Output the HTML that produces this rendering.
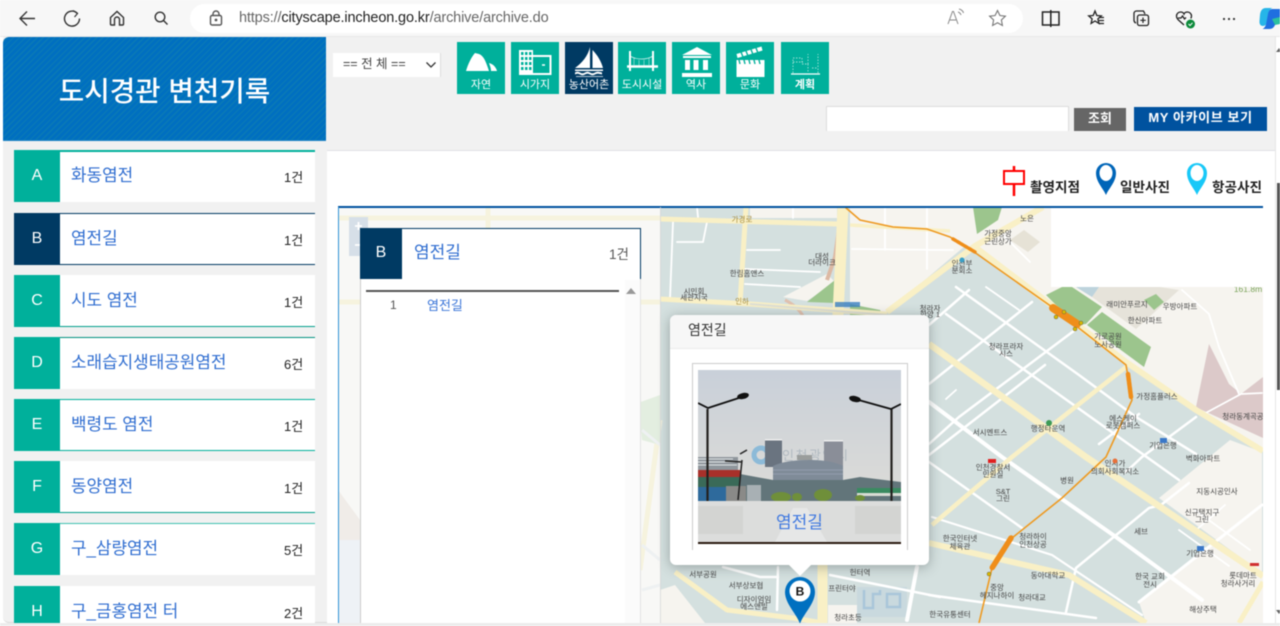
<!DOCTYPE html>
<html lang="ko"><head><meta charset="utf-8"><title>도시경관 변천기록</title>
<style>
*{box-sizing:border-box}
html,body{margin:0;padding:0;width:1280px;height:626px;overflow:hidden;background:#fff}
body{font-family:"Liberation Sans","Noto Sans CJK KR",sans-serif}
#w{position:absolute;left:0;top:0;width:1280px;height:626px;overflow:hidden;filter:blur(.4px)}
.a{position:absolute}
.row{position:absolute;left:14px;width:301px;height:52px;background:#fff}
.row .t{position:absolute;left:0;top:0;width:46px;height:52px;background:#00b09b;color:#fff;font-size:16px;line-height:52px;text-align:center}
.row .n{position:absolute;left:57px;top:14px;font-size:16.9px;line-height:24px;color:#2f6dd0;white-space:nowrap}
.row .c{position:absolute;left:270px;top:19px;font-size:13px;line-height:18px;color:#222;white-space:nowrap}
.tile{position:absolute;top:42px;width:48px;height:52px;background:#00b09b;color:#fff;font-size:11px;text-align:center}
.tile span{position:absolute;left:0;right:0;top:35px;line-height:16px;white-space:nowrap}
.tile svg{position:absolute;left:0;top:0}
.lg{position:absolute;top:180px;font-size:13.6px;font-weight:bold;line-height:16px;color:#222;white-space:nowrap}
text{font-family:"Liberation Sans","Noto Sans CJK KR",sans-serif}
</style></head><body><div id="w">

<!-- browser bar -->
<div class="a" style="left:0;top:0;width:1280px;height:37px;background:#f7f7f7;border-bottom:1px solid #e8e8e8"></div>
<div class="a" style="left:190px;top:4px;width:833px;height:29px;background:#fff;border-radius:15px"></div>
<div class="a" style="left:239px;top:9px;font-size:14.5px;line-height:18px;color:#666;white-space:nowrap;letter-spacing:-.01em">https://<span style="color:#222">cityscape.incheon.go.kr</span>/archive/archive.do</div>
<svg class="a" style="left:0;top:0" width="1280" height="37" fill="none" stroke="#333" stroke-width="1.400">
<path d="M35 18.500H20M27 11.500l-7 7 7 7"/>
<path d="M77.500 13.500a7.500 7.500 0 1 0 2 5"/><path d="M73 10.500l4.500 3-3 3.500" stroke-width="1.200"/>
<path d="M110.500 17.500l6.500-6 6.500 6v6.500a1 1 0 0 1-1 1h-3v-5.500a2.500 2.500 0 0 0-5 0v5.500h-3a1 1 0 0 1-1-1z"/>
<circle cx="160" cy="17" r="4.800"/><path d="M163.500 20.500l4 4"/>
<rect x="210.500" y="15.500" width="11" height="9.500" rx="1.500" stroke="#555"/><path d="M213 15.500v-1.500a3 3 0 0 1 6 0v1.500" stroke="#555"/><circle cx="216" cy="20" r=".7" fill="#555" stroke="#555"/>
<path d="M948 24l4.500-12.500h1L958 24M950 20h6M958 12c1.500 .5 2.500 1.500 3 3M959 9c2 .5 4 2 4.500 4" stroke="#888" stroke-width="1"/>
<path d="M997.500 10.500l2.400 5 5.500.700-4 3.800 1 5.500-4.900-2.700-4.900 2.700 1-5.500-4-3.800 5.500-.700z" stroke="#777" stroke-width="1.100"/>
<path d="M1042.500 12h16.500v13h-16.500zM1050.800 10v17" stroke="#222" stroke-width="1.500" fill="none"/>
<path d="M1095 11l1.800 4.500 4.500.400-3.400 3 1 4.500-3.900-2.400-3.900 2.400 1-4.500-3.400-3 4.500-.400z" stroke="#222" stroke-width="1.300"/><path d="M1099 17.500h5M1099 20.500h5M1099 23.500h5" stroke-width="1.200" stroke="#222"/>
<path d="M1134 13.500a2.500 2.500 0 0 1 2.500-2.500h7l1.500 3M1134 13.500v7a3 3 0 0 0 2 2.500" stroke="#222" stroke-width="1.300"/><rect x="1137.500" y="15" width="11" height="10.500" rx="2" stroke="#222" stroke-width="1.300"/><path d="M1143 17.500v5.500M1140.300 20.300h5.500" stroke="#222" stroke-width="1.200"/>
<path d="M1184 25l-5-4.500c-2-1.800-2.500-3-2.500-4.500a4 4 0 0 1 4-4c1.500 0 3 .8 3.500 2 .5-1.200 2-2 3.500-2a4 4 0 0 1 4 4c0 1-.2 1.500-.7 2.500M1178 18h3l1.500-2 2 3 1.500-1.500" stroke="#222" stroke-width="1.300"/>
<circle cx="1190.500" cy="24" r="4.500" fill="#0c8a3a" stroke="none"/><path d="M1188.500 24l1.500 1.500 2.500-2.700" stroke="#fff" stroke-width="1"/>
<circle cx="1224" cy="19" r="1.100" fill="#333" stroke="none"/><circle cx="1229" cy="19" r="1.100" fill="#333" stroke="none"/><circle cx="1234" cy="19" r="1.100" fill="#333" stroke="none"/>
<path d="M1266 8c-4 0-5.500 3-6 7l-.5 6c-.3 3 1 5 3.500 5 2 0 3.500-1.500 4-4l1.500-9c.5-2.500 2-4.500 4-5z" fill="#26b5e8" stroke="none"/>
<path d="M1280 9h-8c-2 0-3.500 2-4 5l-1.500 8c-.5 3-1.500 6-4 7h7c3 0 5-2 5.800-5l1.200-5h3.500z" fill="#1f6fe0" stroke="none"/>
<path d="M1272 19l3 6 5-1v-7z" fill="#2bc0a0" stroke="none"/>
</svg>

<!-- scrollbar -->
<div class="a" style="left:1275px;top:37px;width:5px;height:589px;background:#fff;border-left:1px solid #e6e6e6"></div>
<div class="a" style="left:1277px;top:183px;width:3px;height:207px;background:#555"></div>
<div class="a" style="left:1276px;top:48px;width:0;height:0;border-left:3px solid transparent;border-right:3px solid transparent;border-bottom:4px solid #666"></div>
<div class="a" style="left:1276px;top:610px;width:0;height:0;border-left:3px solid transparent;border-right:3px solid transparent;border-top:4px solid #666"></div>

<!-- page -->
<div class="a" style="left:3px;top:37px;width:1272px;height:114px;background:#f1f1f1;border-bottom:1px solid #e0e1e5"></div>
<div class="a" style="left:3px;top:37px;width:324px;height:586px;background:#f1f1f1;border-radius:6px 0 0 6px;border-bottom:1px solid #dcdcdc"></div>
<div class="a" style="left:3px;top:37px;width:323px;height:104px;border-radius:6px 0 0 0;background:repeating-linear-gradient(-45deg,#006fc0 0 3px,#0a7ab6 3px 4.200px);border-bottom:1px solid #1f84c4"></div>
<div class="a" style="left:3px;top:73px;width:323px;text-align:center;color:#fff;font-size:27.7px;font-weight:500;line-height:38px;white-space:nowrap">도시경관 변천기록</div>

<!-- rows -->
<div class="row" style="top:150px;border-top:2px solid #00b09b"><div class="t" style="top:-2px">A</div><div class="n" style="top:12px">화동염전</div><div class="c" style="top:17px">1건</div></div>
<div class="row" style="top:213px;border-top:1px solid #003a63;border-bottom:1px solid #003a63"><div class="t" style="top:-1px;background:#003a63">B</div><div class="n" style="top:13px">염전길</div><div class="c" style="top:18px">1건</div></div>
<div class="row" style="top:275px;border-bottom:1px solid #00a08c"><div class="t">C</div><div class="n">시도 염전</div><div class="c">1건</div></div>
<div class="row" style="top:337px;border-top:1px solid #00927f"><div class="t" style="top:-1px">D</div><div class="n" style="top:13px">소래습지생태공원염전</div><div class="c" style="top:18px">6건</div></div>
<div class="row" style="top:399px;border-top:1px solid #00b09b;border-bottom:1px solid #00b09b"><div class="t" style="top:-1px">E</div><div class="n" style="top:13px">백령도 염전</div><div class="c" style="top:18px">1건</div></div>
<div class="row" style="top:461px;border-bottom:1px solid #00a08c"><div class="t">F</div><div class="n">동양염전</div><div class="c">1건</div></div>
<div class="row" style="top:523px;border-top:1px solid #3fc0b0"><div class="t" style="top:-1px">G</div><div class="n" style="top:13px">구_삼량염전</div><div class="c" style="top:18px">5건</div></div>
<div class="a" style="left:14px;top:586px;width:301px;height:37px;overflow:hidden"><div class="row" style="left:0;top:0"><div class="t">H</div><div class="n">구_금홍염전 터</div><div class="c">2건</div></div></div>

<!-- select -->
<div class="a" style="left:333px;top:53px;width:108px;height:24px;background:#fff;border-right:1px solid #ddd;font-size:12.5px;line-height:22px;color:#444;padding-left:10px;white-space:nowrap">== 전 체 ==</div>
<svg class="a" style="left:425px;top:60px" width="12" height="10" fill="none" stroke="#333" stroke-width="1.300"><path d="M1.500 2.500l4.500 4.500 4.500-4.500"/></svg>

<!-- tiles -->
<div class="tile" style="left:457px"><svg width="48" height="52" fill="#fff"><path d="M9 29C11 22 15 14 18 11L22 12C27 14 29 20 32 29zM32 21c4 1 7 4 8 8h-6c0-3-1-5-2-8z"/></svg><span>자연</span></div>
<div class="tile" style="left:511px"><svg width="48" height="52" fill="none" stroke="#fff"><path d="M8 8h14v25H8z" fill="#fff" stroke="none"/><path d="M10 10h2.500v3H10zM14 10h2.500v3H14zM18 10h2.500v3H18zM10 15h2.500v3H10zM14 15h2.500v3H14zM18 15h2.500v3H18zM10 20h2.500v3H10zM14 20h2.500v3H14zM18 20h2.500v3H18zM10 25h2.500v3H10zM14 25h2.500v3H14zM18 25h2.500v3H18z" fill="#00b09b" stroke="none"/><path d="M22 14h17.500v18H22" stroke-width="2"/><path d="M31 23h3" stroke-width="1.500"/></svg><span>시가지</span></div>
<div class="tile" style="left:565px;background:#003a63"><svg width="48" height="52" fill="#fff"><path d="M25 5v21H10c7-5 13-12 15-21zM27.500 8c5 5 9 12 10.500 18H27.500z"/><path d="M10 27.500h28v1.500H10z"/><path d="M10 30.500c2-1 3-1 5 0s3 1 5 0 3-1 5 0 3 1 5 0 3-1 7 0v2c-4-1-5-1-7 0s-3 1-5 0-3-1-5 0-3 1-5 0-3-1-5 0z"/><path d="M11 34h27v1H11z" opacity=".7"/></svg><span>농산어촌</span></div>
<div class="tile" style="left:618px"><svg width="48" height="52" fill="none" stroke="#fff"><path d="M12 9v20M35 9v20" stroke-width="2"/><path d="M9 24.500h31" stroke-width="2.500"/><path d="M12 14c6 4 17 4 23 0" stroke-width=".8" opacity=".8"/><path d="M16 16v7M21 18v6M26 18v6M31 16v7" stroke-width=".6" opacity=".7"/></svg><span>도시시설</span></div>
<div class="tile" style="left:672px"><svg width="48" height="52" fill="#fff"><path d="M25 5l15 8H10z"/><rect x="11" y="14" width="28" height="2"/><rect x="13" y="18" width="5" height="10"/><rect x="21.500" y="18" width="5" height="10"/><rect x="31" y="18" width="5" height="10"/><rect x="10" y="31" width="30" height="4"/></svg><span>역사</span></div>
<div class="tile" style="left:726px"><svg width="48" height="52" fill="#fff"><path d="M10.500 12l25-7.500 1 4-25 7.500z"/><rect x="10.500" y="18" width="28" height="17"/><path d="M15 10l2 5M20 9l2 5M25 7.500l2 5M30 6l2 5M13 18l1 4M18 18l1 4M23 18l1 4M28 18l1 4M33 18l1 4" stroke="#00b09b" stroke-width="1.400"/></svg><span>문화</span></div>
<div class="tile" style="left:781px"><svg width="48" height="52" fill="none" stroke="#cfeee9" stroke-width=".7"><path d="M10 32h29" stroke="#fff" stroke-width="1.200"/><path d="M12 31V16h9v6h6v9M27 22V12M37 31V12M12 20h10M31 26h6" stroke-dasharray="1.500 1.500"/></svg><span style="font-weight:bold">계획</span></div>

<!-- search -->
<div class="a" style="left:826px;top:106px;width:243px;height:25px;background:#fff;border:1px solid #ddd;border-bottom:0"></div>
<div class="a" style="left:1074px;top:108px;width:52px;height:23px;background:#666;color:#fff;font-size:13px;font-weight:bold;line-height:21px;text-align:center">조회</div>
<div class="a" style="left:1134px;top:107px;width:133px;height:24px;background:#00529f;color:#fff;font-size:13px;font-weight:bold;line-height:22px;text-align:center;letter-spacing:.6px;white-space:nowrap">MY 아카이브 보기</div>

<!-- legend -->
<svg class="a" style="left:1000px;top:160px" width="270" height="40">
<path d="M14 6v30" stroke="#f00" stroke-width="2.500"/><rect x="4" y="11" width="20" height="13" fill="#fff" stroke="#f00" stroke-width="2"/>
<path d="M106 35c-3-7-10-13-10-22a10 10 0 0 1 20 0c0 9-7 15-10 22z" fill="#0065b8"/><ellipse cx="106" cy="13" rx="6.500" ry="8" fill="#fff"/>
<path d="M197 35c-3-7-10-13-10-22a10 10 0 0 1 20 0c0 9-7 15-10 22z" fill="#18c8f8"/><ellipse cx="197" cy="13" rx="6.500" ry="8" fill="#fff"/>
</svg>
<div class="lg" style="left:1030px">촬영지점</div>
<div class="lg" style="left:1120px">일반사진</div>
<div class="lg" style="left:1212px">항공사진</div>

<!-- map -->
<svg class="a" style="left:338px;top:206px" width="925" height="417" viewBox="338 206 925 417">
<rect x="338" y="206" width="925" height="417" fill="#d4e0df"/>
<g fill="#f6f4ef">
<path d="M750 207H837V218H750z"/>
<path d="M850 207H1051V307L975 250 965 246 887 312H850z"/>
<path d="M783 297L827 274 835 282 807 301z"/>
<path d="M1051 287H1263V450L1126 365 1051 307z"/>
<path d="M1230 440L1159 498 1262 573V452z"/>
<path d="M1139 602L1216 542 1263 575V623H1146z"/>
<path d="M660 590L675 585 705 623H660z"/>
<path d="M828 605H857V623H828z"/>
</g>
<path d="M1209 344L1229 384 1241 394 1263 377V438L1202 410 1196 407z" fill="#dcc9c9"/>
<path d="M1092 297L1136 329 1179 290 1160 287H1099z" fill="#e6e3da"/>
<path d="M1076 287H1099L1092 297z" fill="#bdd3dc"/>
<g fill="#9cc58d">
<path d="M1046 295L1062 287H1072L1102 307 1086 324 1076 325z"/>
<path d="M1087 325L1102 312 1151 347 1144 367z"/>
<path d="M1144 300L1156 294 1164 302 1154 310z"/>
<path d="M973 207H1002L998 220 977 234z"/>
<path d="M807 302L835 280V303z"/>
<path d="M850 304L880 310 884 316H850z"/>
</g>
<path d="M1010 240l14-10 16 12-12 10z" fill="#e6e2d6"/>
<rect x="857" y="587" width="50" height="30" fill="#c9d9de"/>
<g fill="none" stroke="#a9c6da" stroke-width="2.500"><path d="M864 590v18h9v-14h7v-4"/><rect x="887" y="594" width="13" height="13"/></g>
<path d="M785 300c8 4 14 9 18 16" stroke="#dfc0ae" stroke-width="3" fill="none"/>
<path d="M842 207L835 257 827 280" stroke="#dcb9a4" stroke-width="4" fill="none"/>
<!-- white roads -->
<g stroke="#fff" fill="none" stroke-linecap="round">
<g stroke-width="1.800">
<path d="M673 222L670 299M677 242H703L707 222M697 207L698 217M747 250L780 250M745 269L820 272M745 284L800 287M793 207V218"/>
<path d="M885 207V250M927 207V269M852 249L953 250M1003 235L1030 262"/>
<path d="M986 287L1019 310M1182 290L1209 314 1219 347 1239 394M1202 415L1241 394 1262 393M946 399L956 390"/>
<path d="M1179 530l50 36M1195 510l55 40M1225 505l-30 26"/>
</g>
<g stroke-width="2.500">
<path d="M956 287L1079 375 1136 417 1196 454"/>
<path d="M946 314L1179 480"/>
<path d="M929 462L1022 528"/>
<path d="M969 290L929 325"/>
<path d="M1032 302L929 384"/>
<path d="M1075 330L959 417 929 444"/>
<path d="M1045 365L929 455"/>
<path d="M1196 417L1142 457 1126 472"/>
<path d="M1139 414L1099 444"/>
<path d="M1189 483L1161 505 1149 508 1076 568 1066 612"/>
<path d="M929 595L1096 618"/>
<path d="M830 575L940 597"/>
<path d="M723 567L760 577H778M778 567L777 610"/>
</g>
<path d="M1262 505L1139 602" stroke-width="3"/>
<path d="M929 402L1002 457 1116 537 1202 600" stroke-width="4"/>
<path d="M932 517L1052 555 1142 615" stroke-width="2.200"/>
<path d="M917 567L907 620" stroke-width="4"/>
</g>
<!-- yellow roads -->
<g stroke="#f9f0c6" fill="none" stroke-linejoin="round">
<path d="M660 219L837 224" stroke-width="5"/>
<path d="M850 225L950 231" stroke-width="3.500"/>
<path d="M660 299L750 304 887 314" stroke-width="5"/>
<path d="M746 207L740 304" stroke-width="5"/>
<path d="M843 207L838 316" stroke-width="11"/>
<path d="M887 312L975 246 1043 207" stroke-width="6"/>
<path d="M975 247L1126 362 1196 410 1263 451" stroke-width="6"/>
<path d="M929 344L1086 457 1263 576" stroke-width="6.500"/>
<path d="M1126 367L1012 457 932 525" stroke-width="4.500"/>
<path d="M929 543L1069 575 1146 623" stroke-width="6"/>
<path d="M1263 582L1239 623" stroke-width="5"/>
<path d="M675 572L727 610 793 618 823 623" stroke-width="5"/>
<path d="M822.500 565V623" stroke-width="10"/>
</g>
<path d="M750 304L887 315" stroke="#dedfd4" stroke-width="2" fill="none"/>
<rect x="835" y="302" width="25" height="5" fill="#3a80c0" opacity=".8"/>
<!-- orange rail -->
<path d="M845 207L860 220 893 227 927 229 950 237 977 254 1052 307 1126 365 1132 400 1106 457 1062 498 1012 538 992 568 979 623" stroke="#ee9a22" stroke-width="1.600" fill="none"/>
<g stroke="#ef8e1a" fill="none" stroke-linecap="round">
<path d="M953 239L975 252" stroke-width="3.500" stroke-dasharray="3 1.500"/>
<path d="M1053 308L1077 324" stroke-width="8"/>
<path d="M1128 374L1131 397" stroke-width="4.500" stroke-dasharray="3 1.200"/>
<path d="M1011 538L992 568" stroke-width="5.500" stroke-dasharray="5 1"/>
</g>
<g fill="#d8b800" stroke="#555" stroke-width=".4"><circle cx="1056" cy="317" r="2"/><circle cx="1064" cy="312" r="2"/><circle cx="1075" cy="329" r="2"/><circle cx="1081" cy="323" r="2"/><circle cx="989" cy="574" r="2"/></g>
<!-- labels -->
<g font-size="7.500" fill="#444" text-anchor="middle">
<text x="998" y="236">가정중앙</text><text x="998" y="244">근린상가</text>
<text x="1027" y="221">노은</text>
<text x="962" y="266">인천부</text><text x="962" y="273">분회소</text>
<text x="930" y="311">청라자</text><text x="930" y="317">한양 1</text>
<text x="1127" y="307">래미안푸르지</text><text x="1180" y="309">우방아파트</text><text x="1145" y="323">한신아파트</text>
<text x="1108" y="339">가로공원</text><text x="1108" y="347">노사공원</text>
<text x="1006" y="349">청라프라자</text><text x="1006" y="356">시스</text>
<text x="1157" y="399">가정홈플러스</text><text x="1243" y="419">청라동계곡공</text>
<text x="1123" y="421">에스케이</text><text x="1123" y="428">로봇캠퍼스</text>
<text x="1048" y="431">행정타운역</text><text x="990" y="435">서시멘트스</text>
<text x="1163" y="448">기업은행</text><text x="1203" y="461">벽화아파트</text>
<text x="993" y="470">인천경찰서</text><text x="993" y="477">민원실</text>
<text x="1115" y="466">인시가</text><text x="1115" y="474">의회사회복지소</text>
<text x="1067" y="483">병원</text><text x="1003" y="494">S&amp;T</text><text x="1003" y="501">그린</text>
<text x="1217" y="494">지동시공인사</text><text x="1202" y="515">신규택지구</text><text x="1202" y="522">그린</text>
<text x="1141" y="534">세브</text><text x="960" y="541">한국인터넷</text><text x="960" y="549">체육관</text>
<text x="1033" y="539">청라하이</text><text x="1033" y="547">인천상공</text>
<text x="1200" y="556">기업은행</text><text x="1048" y="578">동아대학교</text>
<text x="1150" y="579">한국 교회</text><text x="1150" y="587">전시</text>
<text x="1243" y="578">롯데마트</text><text x="1238" y="586">청라사거리</text>
<text x="997" y="590">중앙</text><text x="997" y="598">헤지나하이</text><text x="1032" y="600">청라대교</text>
<text x="1203" y="612">해상주택</text><text x="950" y="617">한국유통센터</text>
<text x="860" y="575">헌터역</text><text x="746" y="588">서부상보협</text><text x="754" y="602">디자이엄임</text><text x="754" y="609">에스앤빌</text>
<text x="703" y="577">서부공원</text><text x="842" y="591">프린터야</text><text x="848" y="620">청라초등</text>
<text x="747" y="276">한림홈앤스</text><text x="822" y="259">대성</text><text x="822" y="265">더라이크</text>
<text x="694" y="294">시민회</text><text x="694" y="300">세관지국</text>
<text x="742" y="222" fill="#a58b3a">가경로</text>
<text x="742" y="304" fill="#a58b3a">인하</text>
<text x="890" y="322">인터</text>
</g>
<text x="1248" y="292" font-size="8.500" fill="#7aa35a" text-anchor="middle">161.8m</text>
<g><circle cx="1049" cy="423" r="3" fill="#3d9a55"/><rect x="988" y="459" width="8" height="4" fill="#e02020"/><rect x="1160" y="438" width="7" height="5" fill="#3a78c8"/><rect x="1197" y="546" width="7" height="5" fill="#3a78c8"/><rect x="1250" y="563" width="9" height="3" fill="#d03030"/><circle cx="962" cy="260" r="2.500" fill="#3aa0c8"/><circle cx="1115" cy="461" r="2.500" fill="#e8703a"/></g>

<!-- white-out top right -->
<rect x="1051" y="207" width="212" height="80" fill="#fff"/>
<!-- faded left -->
<rect x="338" y="207" width="322" height="416" fill="#f8f8f6"/>
<g stroke="#f5f1d8" stroke-width="5" fill="none" opacity=".8"><path d="M338 218H660M338 302H660M488 207V316M660 420L640 570"/></g>
<path d="M638 403L660 395V445L642 440z" fill="#e3eee0"/>
<path d="M338 490l22 30V623H338z" fill="#f0ece8"/>
<path d="M338 540h22v83H338z" fill="#eef2f6"/>
<g stroke="#eef1f2" stroke-width="3" fill="none"><path d="M642 430L660 445M642 545L660 560M642 590L660 585"/></g>
<rect x="349" y="217" width="19" height="39" fill="#d6dfe8"/>
<path d="M355 226h7M358.500 222v8M355 245h7" stroke="#fff" stroke-width="1.800"/>
<!-- frame -->
<path d="M338 207H1263" stroke="#00529f" stroke-width="2"/>
<path d="M338.500 207V623" stroke="#2f93d6" stroke-width="1"/>
<path d="M660.500 207V623" stroke="#d8d8d8" stroke-width=".8"/>
</svg>

<!-- list panel -->
<div class="a" style="left:360px;top:228px;width:281px;height:395px;background:#fff;border-left:1px solid #ccc;border-right:1px solid #e2e2e2"></div>
<div class="a" style="left:625px;top:280px;width:15px;height:343px;background:#fbfbfb"></div>
<div class="a" style="left:361px;top:228px;width:280px;height:51px;background:#fff;border-top:1px solid #003a63;border-right:1px solid #003a63"></div>
<div class="a" style="left:360px;top:228px;width:42px;height:51px;background:#003a63;color:#fff;font-size:16px;line-height:50px;text-align:center">B</div>
<div class="a" style="left:414px;top:241px;font-size:17px;line-height:24px;color:#2f6dd0;white-space:nowrap">염전길</div>
<div class="a" style="left:609px;top:246px;font-size:13.500px;line-height:18px;color:#555;white-space:nowrap">1건</div>
<div class="a" style="left:366px;top:290px;width:253px;height:2px;background:#555"></div>
<div class="a" style="left:626px;top:288px;width:0;height:0;border-left:5px solid transparent;border-right:5px solid transparent;border-bottom:6px solid #999"></div>
<div class="a" style="left:390px;top:297px;font-size:12px;line-height:17px;color:#555">1</div>
<div class="a" style="left:427px;top:297px;font-size:13px;line-height:17px;color:#3a75d8;white-space:nowrap">염전길</div>

<!-- popup -->
<div class="a" style="left:670px;top:315px;width:259px;height:250px;background:#fff;border-radius:6px;box-shadow:0 2px 12px rgba(60,70,70,.4)"></div>
<div class="a" style="left:670px;top:315px;width:259px;height:34px;background:#f7f7f7;border-radius:6px 6px 0 0;border-bottom:1px solid #ebebeb;font-size:14px;line-height:31px;color:#333;padding-left:18px;white-space:nowrap">염전길</div>
<div class="a" style="left:789px;top:565px;width:0;height:0;border-left:11px solid transparent;border-right:11px solid transparent;border-top:11px solid #fff"></div>
<div class="a" style="left:692px;top:363px;width:216px;height:187px;background:#fff;border:1px solid #ccc;border-bottom:0"></div>
<svg class="a" style="left:698px;top:370px" width="203" height="175" viewBox="698 370 203 175">
<defs><linearGradient id="sk" x1="0" y1="0" x2="0" y2="1"><stop offset="0" stop-color="#c9d0d9"/><stop offset="1" stop-color="#dddcd8"/></linearGradient></defs>
<rect x="698" y="370" width="203" height="131" fill="url(#sk)"/>
<circle cx="761" cy="455" r="7" fill="none" stroke="#8cbad8" stroke-width="5"/>
<text x="782" y="460" font-size="13" fill="#aab4bc" textLength="66" opacity=".85">인천광역시</text>
<rect x="765" y="439" width="17" height="28" fill="#6a7480"/><rect x="765" y="439" width="17" height="1.500" fill="#eee"/>
<rect x="824" y="440" width="19" height="26" fill="#8a8e98"/><rect x="824" y="440" width="19" height="1.500" fill="#eee"/>
<rect x="797" y="455" width="15" height="5" fill="#9a9d9c"/><path d="M773 466c8-4 20-6 36-6s26 2 34 6v14h-70z" fill="#7f8b98"/>
<path d="M773 470h70M773 474h70" stroke="#939dac" stroke-width="1"/>
<path d="M740 474L773 480H843L860 477 901 482V501H740z" fill="#62757a"/>
<rect x="857" y="488" width="44" height="5" fill="#3a8a60"/><rect x="857" y="493" width="44" height="3" fill="#d8dcd4"/>
<rect x="698" y="457" width="40" height="13" fill="#8f969c"/><path d="M698 459h35M698 462h37M698 465h39" stroke="#dfe3e5" stroke-width="1"/>
<rect x="698" y="470" width="42" height="7" fill="#a8302a"/><rect x="698" y="477" width="42" height="10" fill="#3a6a58"/><rect x="698" y="487" width="42" height="14" fill="#2e6a9c"/>
<rect x="726" y="486" width="20" height="15" fill="#8a8a88"/><rect x="747" y="485" width="14" height="16" fill="#a8b0b4"/>
<g fill="#6f8f3a"><ellipse cx="781" cy="497" rx="10" ry="5"/><ellipse cx="797" cy="497" rx="5" ry="4"/><ellipse cx="823" cy="495" rx="9" ry="6"/><ellipse cx="860" cy="498" rx="5" ry="3"/></g>
<path d="M742 460L738 500M747 450l-7 4M725 461l17 1" stroke="#222" stroke-width="1.500" fill="none"/>
<path d="M707.500 409V501M891.500 408V501" stroke="#23211f" stroke-width="2.200"/>
<path d="M698 403L708 408 745 396" stroke="#111" stroke-width="1.800" fill="none"/><ellipse cx="743" cy="396" rx="6" ry="3" fill="#111" transform="rotate(-12 743 396)"/>
<path d="M901 404L891 409 855 399" stroke="#111" stroke-width="1.800" fill="none"/><ellipse cx="855" cy="399" rx="6" ry="3" fill="#111" transform="rotate(12 855 399)"/>
<rect x="698" y="501" width="203" height="41" fill="#dcdddc"/>
<path d="M698 506h45v28h-45zM855 506h46v28h-46z" fill="#d3d4d2"/><path d="M775 542l18-34h14l20 34z" fill="#e6e7e7"/>
<rect x="698" y="542" width="203" height="2" fill="#2a1a10"/>
</svg>
<div class="a" style="left:698px;top:511px;width:203px;text-align:center;font-size:17px;line-height:24px;color:#3f78e0;white-space:nowrap">염전길</div>

<!-- pin -->
<svg class="a" style="left:784px;top:576px" width="32" height="48">
<path d="M16 48C13 38 1 28 1 16a15 15 0 0 1 30 0c0 12-12 22-15 32z" fill="#0070c0"/>
<circle cx="16" cy="15" r="10.500" fill="#fff"/>
<text x="16" y="19.500" font-size="12" font-weight="bold" fill="#111" text-anchor="middle">B</text>
</svg>

<div class="a" style="left:0;top:623px;width:1280px;height:3px;background:#ececec"></div>
</div></body></html>
